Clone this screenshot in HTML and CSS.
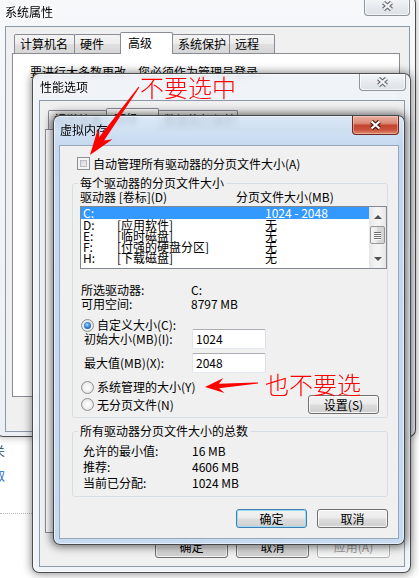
FILE: index.html
```html
<!DOCTYPE html>
<html lang="zh-CN">
<head>
<meta charset="utf-8">
<title>虚拟内存</title>
<link rel="stylesheet" href="styles.css">
</head>
<body>
<div class="desk">
  <div class="bg-app">
    <div class="frag f1">关</div>
    <div class="frag f2">取</div>
    <div class="dots"></div>
  </div>

  <section class="win sys">
    <header class="titlebar">
      <span class="title">系统属性</span>
      <span class="close-btn inactive"><svg width="13" height="10" viewBox="0 0 13 10"><path d="M2.5 1.5L10.5 8.5M10.5 1.5L2.5 8.5" stroke="#6a6f76" stroke-width="4.4"/><path d="M2.5 1.5L10.5 8.5M10.5 1.5L2.5 8.5" stroke="#f4f4f4" stroke-width="2.2"/></svg></span>
    </header>
    <div class="client">
      <div class="tabstrip">
        <span class="tab w-cn">计算机名</span>
        <span class="tab w-hw">硬件</span>
        <span class="tab sel w-adv">高级</span>
        <span class="tab w-sp">系统保护</span>
        <span class="tab w-rm">远程</span>
      </div>
      <div class="tabpanel sys-panel"><p>要进行大多数更改，您必须作为管理员登录。</p></div>
    </div>
  </section>

  <section class="win po">
    <header class="titlebar">
      <span class="title">性能选项</span>
      <span class="close-btn inactive"><svg width="13" height="10" viewBox="0 0 13 10"><path d="M2.5 1.5L10.5 8.5M10.5 1.5L2.5 8.5" stroke="#6a6f76" stroke-width="4.4"/><path d="M2.5 1.5L10.5 8.5M10.5 1.5L2.5 8.5" stroke="#f4f4f4" stroke-width="2.2"/></svg></span>
    </header>
    <div class="client">
      <div class="tabstrip">
        <span class="tab w-vis">视觉效果</span>
        <span class="tab sel w-adv2">高级</span>
        <span class="tab w-dep">数据执行保护</span>
      </div>
      <div class="tabpanel po-panel"></div>
      <div class="btn-row">
        <span class="btn big">确定</span>
        <span class="btn big">取消</span>
        <span class="btn big disabled">应用(A)</span>
      </div>
    </div>
  </section>

  <section class="win vm">
    <header class="titlebar">
      <span class="title">虚拟内存</span>
      <span class="close-btn active"><svg width="13" height="10" viewBox="0 0 13 10"><path d="M2.5 1.5L10.5 8.5M10.5 1.5L2.5 8.5" stroke="#4a1a12" stroke-width="4.4"/><path d="M2.5 1.5L10.5 8.5M10.5 1.5L2.5 8.5" stroke="#ffffff" stroke-width="2.2"/></svg></span>
    </header>
    <div class="client">
      <div class="chk-row"><span class="cb"></span><span>自动管理所有驱动器的分页文件大小(A)</span></div>

      <fieldset class="grp g1">
        <legend>每个驱动器的分页文件大小</legend>
        <div class="hdr"><span>驱动器 [卷标](D)</span><span>分页文件大小(MB)</span></div>
        <div class="listbox">
          <div class="rows">
            <div class="row sel"><span>C:</span><span></span><span>1024 - 2048</span></div>
            <div class="row"><span>D:</span><span>[应用软件]</span><span>无</span></div>
            <div class="row"><span>E:</span><span>[临时磁盘]</span><span>无</span></div>
            <div class="row"><span>F:</span><span>[付强的硬盘分区]</span><span>无</span></div>
            <div class="row"><span>H:</span><span>[下载磁盘]</span><span>无</span></div>
          </div>
          <div class="sb">
            <div class="sb-btn up"><i></i></div>
            <div class="thumb"><i></i><i></i><i></i><i></i></div>
            <div class="sb-fill"></div>
            <div class="sb-btn down"><i></i></div>
          </div>
        </div>
        <div class="kv first"><span>所选驱动器:</span><span>C:</span></div>
        <div class="kv"><span>可用空间:</span><span>8797 MB</span></div>
        <div class="opt o-custom"><span class="radio on"></span><span>自定义大小(C):</span></div>
        <div class="field f-init"><span>初始大小(MB)(I):</span><span class="tb">1024</span></div>
        <div class="field f-max"><span>最大值(MB)(X):</span><span class="tb">2048</span></div>
        <div class="opt o-sys"><span class="radio"></span><span>系统管理的大小(Y)</span></div>
        <div class="opt-row">
          <div class="opt"><span class="radio"></span><span>无分页文件(N)</span></div>
          <span class="btn set">设置(S)</span>
        </div>
      </fieldset>

      <fieldset class="grp g2">
        <legend>所有驱动器分页文件大小的总数</legend>
        <div class="kv2"><span>允许的最小值:</span><span>16 MB</span></div>
        <div class="kv2"><span>推荐:</span><span>4606 MB</span></div>
        <div class="kv2"><span>当前已分配:</span><span>1024 MB</span></div>
      </fieldset>

      <div class="btn-row">
        <span class="btn default">确定</span>
        <span class="btn">取消</span>
      </div>
    </div>
  </section>

  <svg class="annot" width="419" height="578" viewBox="0 0 419 578">
    <polygon fill="#ff0000" points="139.49,87.35 104.13,140.54 112.51,139.18 90,155 97.91,128.65 99.27,137.03 138.51,86.65"/>
    <polygon fill="#ff0000" points="258.05,383.6 219.13,388.24 224.5,393.06 205,387 223.38,378.1 218.79,383.66 257.95,382.4"/>
  </svg>
  <div class="note n1">不要选中</div>
  <div class="note n2">也不要选</div>
</div>
</body>
</html>
```

FILE: styles.css
```css
* { box-sizing: border-box; }
html, body { margin: 0; padding: 0; }
body {
  width: 419px;
  height: 578px;
  overflow: hidden;
  background: #ffffff;
  font-family: "Noto Sans CJK SC", "Noto Sans", sans-serif;
  font-size: 12px;
  color: #000;
}
.desk { position: relative; width: 419px; height: 578px; overflow: hidden; }

/* window behind everything, lower left */
.bg-app { position: absolute; left: 0; top: 437px; width: 40px; height: 141px; background: #fff; }
.frag { line-height: 14px; margin-left: -7px; }
.f1 { margin-top: 7px; color: #3a5676; }
.f2 { margin-top: 11px; color: #2a66cf; }
.dots { margin-top: 30px; height: 1px; width: 32px; border-top: 1px dotted #b8b8b8; }

/* ---------- generic window ---------- */
.win {
  position: absolute;
  display: flex;
  flex-direction: column;
  border: 1px solid rgba(30, 30, 30, .78);
  border-radius: 7px;
  backdrop-filter: blur(2.5px);
}
.titlebar { display: flex; align-items: flex-start; flex: none; }
.title { line-height: 16px; white-space: nowrap; }
.close-btn {
  margin-left: auto;
  display: flex;
  align-items: center;
  justify-content: center;
  border-radius: 0 0 4px 4px;
  flex: none;
}
.close-btn.inactive {
  border: 1px solid #8f959c;
  border-top: 0;
  background: linear-gradient(#f6f8fa, #e6eaef 55%, #dde2e8);
  box-shadow: inset 0 0 0 1px rgba(255,255,255,.7);
}
.close-btn.active {
  border: 1px solid #6b2a1f;
  border-top: 0;
  background: linear-gradient(#eab0a3 0%, #dc8b78 40%, #c4462e 52%, #c9513a 75%, #e08a6f 100%);
  box-shadow: inset 0 0 0 1px rgba(255,220,210,.45);
}
.client {
  flex: 1;
  min-height: 0;
  border: 1px solid #8c99a8;
  background: #f0f0f0;
}

/* ---------- tabs ---------- */
.tabstrip { display: flex; align-items: flex-end; flex: none; position: relative; z-index: 1; }
.tab {
  height: 19px;
  border: 1px solid #898c95;
  border-bottom: 0;
  border-radius: 2px 2px 0 0;
  background: linear-gradient(#f4f4f4, #ececec 50%, #e0e0e0 50%, #d6d6d6);
  padding-left: 5px;
  line-height: 18px;
  margin-right: -1px;
  white-space: nowrap;
  overflow: hidden;
  flex: none;
}
.tab.sel { height: 22px; margin-bottom: -1px; background: #fff; padding-left: 7px; line-height: 20px; }
.tabpanel { border: 1px solid #898c95; background: #fff; flex: none; }

/* ---------- system properties ---------- */
.sys {
  left: -4px; top: -4px; width: 420px; height: 441px;
  background: linear-gradient(#f7f8fa, #eceff3);
  box-shadow: 0 0 8px rgba(0,0,0,.3);
}
.sys .titlebar { height: 29px; padding-left: 8px; }
.sys .title { padding-top: 7px; }
.sys .close-btn { width: 46px; height: 19px; margin-right: 5px; }
.sys .client { margin: 0 5px 4px 8px; padding: 5px 9px 0 6px; }
.sys .tabstrip { height: 21px; padding-left: 2px; }
.w-cn { width: 61px; }
.w-hw { width: 47px; }
.w-adv { width: 53px; }
.w-sp { width: 58px; }
.w-rm { width: 46px; }
.sys-panel { height: 344px; }
.sys-panel p { margin: 0; padding: 11px 0 0 17px; line-height: 14px; white-space: nowrap; }

/* ---------- performance options ---------- */
.po {
  left: 32px; top: 73px; width: 379px; height: 500px;
  background: rgba(238, 242, 247, .88);
  box-shadow: 0 0 9px 1px rgba(0,0,0,.45), inset 0 0 0 1px rgba(255,255,255,.6);
}
.po .titlebar { height: 26px; padding-left: 7px; }
.po .title { padding-top: 5px; }
.po .close-btn { width: 47px; height: 17px; margin-right: 4px; }
.po .client { margin: 0 5px 5px 6px; padding: 6px 4px 8px 5px; display: flex; flex-direction: column; }
.po .tabstrip { height: 22px; padding-left: 3px; }
.w-vis { width: 59px; }
.w-adv2 { width: 53px; }
.w-dep { width: 80px; }
.po-panel { height: 404px; }
.po .btn-row { margin-top: 3px; gap: 8px; padding-right: 10px; }

/* ---------- virtual memory ---------- */
.vm {
  left: 53px; top: 115px; width: 352px; height: 430px;
  background: linear-gradient(rgba(214, 230, 246, .86), rgba(190, 213, 238, .9) 30px, rgba(196, 218, 240, .95));
  box-shadow: 0 0 9px 2px rgba(0,0,0,.55), inset 0 0 0 1px rgba(255,255,255,.55);
}
.vm .titlebar { height: 29px; padding-left: 6px; }
.vm .title { padding-top: 6px; }
.vm .close-btn { width: 47px; height: 19px; margin-right: 5px; }
.vm .client { margin: 0 5px 5px 5px; display: flex; flex-direction: column; border-color: #95a7bd; }

.chk-row { display: flex; align-items: center; gap: 3px; height: 13px; margin: 11px 0 0 17px; line-height: 14px; white-space: nowrap; }
.cb {
  width: 13px; height: 13px; flex: none;
  border: 1px solid #8e8f8f;
  background: linear-gradient(135deg, #c9cdd3, #eceef0 70%, #f7f7f7);
  box-shadow: inset 0 0 0 2px #f4f4f4, inset 0 0 0 3px #b9bdc3;
}

.grp {
  margin: 6px 10px 0 12px;
  border: 1px solid #d5dfe5;
  border-radius: 3px;
  min-width: 0;
}
.grp legend { padding: 0 2px; margin-left: -2px; line-height: 14px; white-space: nowrap; }
.g1 { padding: 0 0 4px 7px; }
.g2 { padding: 5px 0 5px 7px; }

.hdr { display: grid; grid-template-columns: 156px 1fr; height: 14px; line-height: 14px; white-space: nowrap; }

.listbox {
  margin-top: 2px;
  height: 63px;
  border: 1px solid #828790;
  background: #fff;
  display: flex;
}
.rows { flex: 1; overflow: hidden; }
.row {
  display: grid;
  grid-template-columns: 34px 148px 1fr;
  height: 11px;
  line-height: 11px;
  padding-left: 2px;
  white-space: nowrap;
}
.row.sel { height: 12px; line-height: 12px; background: #3399ff; color: #fff; }

.sb {
  width: 17px; flex: none;
  display: flex; flex-direction: column;
  background: linear-gradient(90deg, #e6e6e6, #f4f4f4 40%, #f4f4f4 60%, #e6e6e6);
}
.sb-btn { height: 17px; display: flex; justify-content: center; flex: none; }
.sb-btn.up { align-items: flex-end; padding-bottom: 5px; }
.sb-btn.down { align-items: flex-start; padding-top: 6px; }
.sb-btn.up i { width: 0; height: 0; border-left: 4px solid transparent; border-right: 4px solid transparent; border-bottom: 4px solid #505050; }
.sb-btn.down i { width: 0; height: 0; border-left: 4px solid transparent; border-right: 4px solid transparent; border-top: 4px solid #505050; }
.thumb {
  margin: 2px 1px 0;
  height: 18px;
  flex: none;
  border: 1px solid #979797;
  border-radius: 2px;
  background: linear-gradient(90deg, #f5f5f5, #e8e8e8 50%, #dcdcdc 50%, #d2d2d2);
  display: flex; flex-direction: column; align-items: center; justify-content: center; gap: 1px;
}
.thumb i { width: 7px; height: 1px; background: #6e6e6e; box-shadow: 0 1px 0 #fff; }
.sb-fill { flex: 1; }

.kv { display: grid; grid-template-columns: 110px 1fr; height: 14px; line-height: 14px; padding-left: 1px; white-space: nowrap; }
.kv.first { margin-top: 14px; }

.opt { display: flex; align-items: center; gap: 3px; height: 14px; line-height: 14px; padding-left: 1px; white-space: nowrap; }
.o-custom { margin-top: 7px; }
.o-sys { margin-top: 7px; }
.radio {
  width: 13px; height: 13px; flex: none;
  border-radius: 50%;
  border: 1px solid #8e8f8f;
  background: radial-gradient(circle at 50% 50%, #ffffff 0%, #f2f2f2 45%, #d4d4d4 100%);
  display: flex; align-items: center; justify-content: center;
}
.radio.on::after {
  content: "";
  width: 7px; height: 7px; border-radius: 50%;
  background: radial-gradient(circle at 45% 40%, #b6e1ff 0%, #3a8fe0 40%, #0d3f80 100%);
}

.field { display: grid; grid-template-columns: 108px 74px; align-items: center; height: 20px; line-height: 14px; padding-left: 4px; white-space: nowrap; }
.f-init { margin-top: -3px; }
.f-max { margin-top: 4px; }
.tb {
  height: 20px;
  border: 1px solid;
  border-color: #abadb3 #dbdfe6 #e3e9ef #e2e3ea;
  border-radius: 2px;
  background: #fff;
  padding-left: 3px;
  line-height: 18px;
}

.opt-row { display: flex; align-items: center; justify-content: space-between; height: 17px; margin-top: 2px; padding-right: 8px; }

.btn {
  display: flex; align-items: center; justify-content: center;
  width: 71px; height: 19px;
  border: 1px solid #707070;
  border-radius: 3px;
  background: linear-gradient(#f2f2f2 0%, #ebebeb 48%, #dddddd 52%, #cfcfcf 100%);
  box-shadow: inset 0 0 0 1px rgba(255,255,255,.75);
  line-height: 14px;
  white-space: nowrap;
  flex: none;
}
.btn.default { border-color: #3c7fb1; box-shadow: inset 0 0 0 1px #9fdcf7; }
.btn.big { width: 73px; height: 22px; }
.btn.disabled { color: #9a9a9a; border-color: #adb2b5; background: #f4f4f4; }

.kv2 { display: grid; grid-template-columns: 109px 1fr; height: 16px; line-height: 16px; padding-left: 3px; white-space: nowrap; }

.btn-row { display: flex; justify-content: flex-end; flex: none; }
.vm .btn-row { margin-top: 12px; gap: 10px; padding-right: 10px; }

/* ---------- annotations ---------- */
.annot { position: absolute; left: 0; top: 0; z-index: 10; pointer-events: none; }
.note {
  position: absolute;
  z-index: 11;
  color: #ff0000;
  font-size: 24px;
  line-height: 24px;
  font-weight: 300;
  white-space: nowrap;
}
.n1 { left: 140px; top: 75px; }
.n2 { left: 265px; top: 372px; }
```
